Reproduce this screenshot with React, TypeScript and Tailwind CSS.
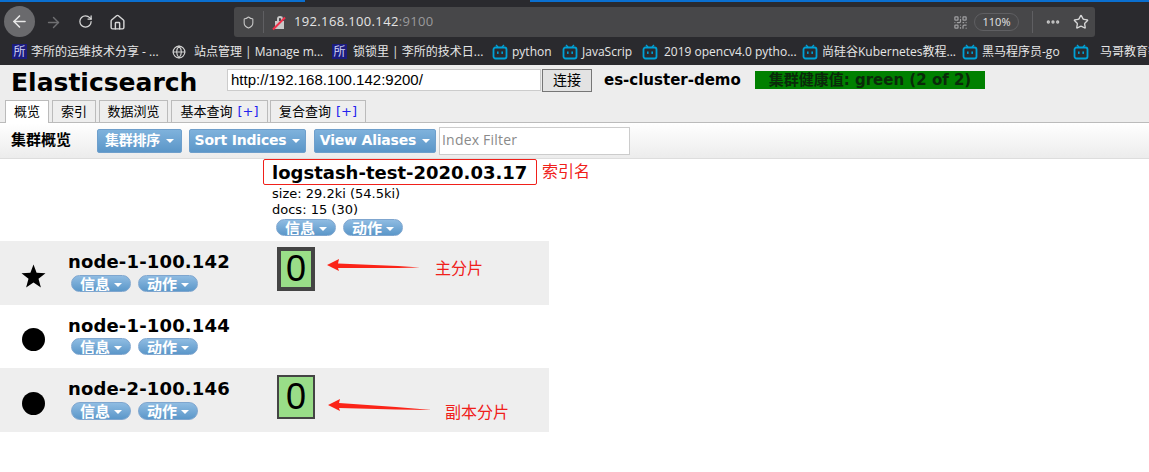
import React from 'react';
import { ArrowLeft, ArrowRight, RotateCw, Home, Star, Ellipsis, Shield, Globe, QrCode } from 'lucide-react';

const FONT = "font-['DejaVu_Sans','Noto_Sans_CJK_SC',sans-serif]";

const Tv = () => (
  <svg width="16" height="16" viewBox="0 0 16 16" fill="none" className="shrink-0">
    <path d="M4 1l2 2M12 1l-2 2" stroke="#00a1d6" strokeWidth="1.4" />
    <rect x="1.5" y="3.5" width="13" height="11" rx="2" stroke="#00a1d6" strokeWidth="1.8" />
    <rect x="5" y="7.5" width="1.6" height="2.4" fill="#00a1d6" />
    <rect x="9.4" y="7.5" width="1.6" height="2.4" fill="#00a1d6" />
  </svg>
);

const Suo = () => (
  <span className="w-[15px] h-[15px] shrink-0 bg-[#1c1c7c] text-[#cfd2f5] text-[12px] leading-[15px] text-center">所</span>
);

const Bookmark = ({ icon, label, w, gap = 'gap-[4px]' }: { icon: React.ReactNode; label: string; w: string; gap?: string }) => (
  <div className={`flex items-center shrink-0 ${gap} ${w}`}>
    {icon}
    <span className="text-[12px] text-[#e6e6e6] whitespace-nowrap">{label}</span>
  </div>
);

const Pill = ({ label, h = 'h-[17px]' }: { label: string; h?: string }) => (
  <div className={`w-[60px] ${h} overflow-hidden rounded-[9px] border border-[#7fa6cf] bg-gradient-to-b from-[#8fbce2] to-[#5b97c9] flex items-start justify-center gap-[4px] text-[15px] leading-[19px] font-bold text-white`}>
    {label}
    <span className="mt-[7px] border-x-[4px] border-t-[4px] border-x-transparent border-t-white" />
  </div>
);

const Actions = ({ h }: { h?: string }) => (
  <div className="flex gap-[7px]">
    <Pill label="信息" h={h} />
    <Pill label="动作" h={h} />
  </div>
);

const ToolButton = ({ label, w, ml = '' }: { label: string; w: string; ml?: string }) => (
  <div className={`${w} ${ml} h-[24px] rounded-[2px] border border-[#6e9fcc] bg-gradient-to-b from-[#7fb2dc] to-[#5b96c8] flex items-center justify-center gap-[6px] text-[14px] tracking-[-0.2px] font-bold text-white`}>
    {label}
    <span className="border-x-[4px] border-t-[4px] border-x-transparent border-t-white" />
  </div>
);

const Tab = ({ children, active, w }: { children: React.ReactNode; active?: boolean; w: string }) => (
  <div className={`${w} h-[22px] border border-[#bbb] border-b-0 text-[13px] leading-[22px] text-center whitespace-nowrap ${active ? 'bg-white h-[23px] -mb-px relative' : 'bg-[#eee]'}`}>
    {children}
  </div>
);

const Plus = () => <span className="text-[#2222ee] ml-[5px]">[+]</span>;

const Shard = ({ border }: { border: string }) => (
  <div className={`w-[38px] h-[44px] bg-[#99dd88] border-[#444] ${border} flex items-center justify-center text-[36px] leading-none font-['Liberation_Sans',sans-serif] text-black`}>
    0
  </div>
);

const Row = ({ icon, name, grey, children, pad, h, pillH, pillTop }: { icon: React.ReactNode; name: string; grey?: boolean; children?: React.ReactNode; pad: string; h: string; pillH?: string; pillTop: string }) => (
  <div className={`${h} w-[549px] flex ${grey ? 'bg-[#eeeeee]' : 'bg-white'}`}>
    <div className="w-[68px] shrink-0 flex justify-center items-center pt-[6px] pr-[2px]">{icon}</div>
    <div className={`w-[209px] shrink-0 ${pad}`}>
      <div className="text-[18px] leading-[22px] tracking-[0.15px] font-bold text-black">{name}</div>
      <div className={`ml-[3px] ${pillTop}`}>
        <Actions h={pillH} />
      </div>
    </div>
    {children}
  </div>
);

const RedArrow = ({ className, d }: { className: string; d: string }) => (
  <svg width="110" height="20" viewBox="0 0 110 20" className={`absolute ${className}`}>
    <path d={d} fill="#fb2418" />
  </svg>
);

const Dot = () => <div className="w-[23px] h-[23px] rounded-full bg-black" />;

export default function App() {
  return (
    <div className={`relative w-[1149px] h-[472px] overflow-hidden bg-white ${FONT}`}>
      {/* Browser chrome */}
      <div className="h-[65px] bg-[#2a2a2e] font-['Open_Sans','Noto_Sans_CJK_SC',sans-serif]">
        <div className="h-[36px] relative flex items-start">
          <div className="absolute inset-x-0 top-0 h-[2px] flex">
            <div className="w-[305px] bg-[#0a6fd0]" />
            <div className="w-[225px] bg-[#2a2a2e]" />
            <div className="flex-1 bg-[#0a6fd0]" />
          </div>
          <div className="ml-[4px] mt-[6px] w-[31px] h-[31px] rounded-full bg-[#6a6a6d] flex items-center justify-center">
            <ArrowLeft size={19} strokeWidth={2} className="text-[#e8e8e8]" />
          </div>
          <ArrowRight size={17} strokeWidth={2} className="ml-[10px] mt-[14px] text-[#6f6f72]" />
          <RotateCw size={15} strokeWidth={2} className="ml-[16px] mt-[14px] text-[#d8d8d8]" />
          <Home size={17} strokeWidth={2} className="ml-[16px] mt-[14px] text-[#d8d8d8]" />
          <div className="ml-[108px] mt-[7px] w-[861px] h-[30px] rounded-[3px] bg-[#474749] flex items-center">
            <Shield size={13} strokeWidth={2} className="ml-[8px] text-[#c8c8c8]" />
            <div className="ml-[8px] w-px h-[22px] bg-[#5f5f62]" />
            <div className="relative ml-[8px] w-[13px] h-[13px]">
              <div className="absolute left-[3px] top-[5px] w-[9px] h-[8px] bg-[#c8c8c8]" />
              <div className="absolute left-[5px] top-0 w-[6px] h-[7px] rounded-t-full border-2 border-[#c8c8c8] border-b-0" />
              <div className="absolute left-[6px] -top-[1px] w-[2px] h-[17px] rotate-45 bg-[#f0304a]" />
            </div>
            <div className="ml-[9px] text-[13px] tracking-[0.35px] text-[#e4e4e4]">
              192.168.100.142<span className="text-[#9a9a9c]">:9100</span>
            </div>
            <div className="ml-auto flex items-center">
              <QrCode size={15} strokeWidth={2} className="text-[#a0a0a2]" />
              <div className="ml-[6px] w-[45px] h-[18px] rounded-full border border-[#5f5f62] text-[11px] leading-[16px] text-center text-[#e4e4e4]">110%</div>
              <div className="ml-[13px] w-px h-[22px] bg-[#5f5f62]" />
              <Ellipsis size={16} strokeWidth={3} className="ml-[12px] text-[#c8c8c8]" />
              <Star size={16} strokeWidth={2} className="ml-[12px] mr-[6px] text-[#d8d8d8]" />
            </div>
          </div>
        </div>
        <div className="h-[29px] pl-[12px] pt-[2px] flex items-center overflow-hidden">
          <Bookmark w="w-[160px]" icon={<Suo />} label="李所的运维技术分享 - ..." />
          <Bookmark w="w-[160px]" gap="gap-[8px]" icon={<Globe size={14} className="text-[#d0d0d0]" />} label="站点管理 | Manage m..." />
          <Bookmark w="w-[160px]" gap="gap-[6px]" icon={<Suo />} label="锁锁里 | 李所的技术日..." />
          <Bookmark w="w-[70px]" icon={<Tv />} label="python" />
          <Bookmark w="w-[80px]" icon={<Tv />} label="JavaScrip" />
          <Bookmark w="w-[160px]" gap="gap-[6px]" icon={<Tv />} label="2019 opencv4.0 pytho..." />
          <Bookmark w="w-[160px]" icon={<Tv />} label="尚硅谷Kubernetes教程..." />
          <Bookmark w="w-[111px]" icon={<Tv />} label="黑马程序员-go" />
          <Bookmark w="w-[80px]" gap="gap-[11px]" icon={<Tv />} label="马哥教育等" />
        </div>
      </div>

      {/* Header */}
      <div className="h-[57px] bg-[#ededed] relative">
        <div className="flex items-start pl-[11px]">
          <div className="w-[216px] text-[25px] leading-[36px] font-bold text-black">Elasticsearch</div>
          <div className="mt-[4px] w-[314px] h-[22px] bg-white border border-[#ccc] leading-[20px] pl-[3px] font-['Liberation_Sans',sans-serif] text-[15px] text-black">
            http://192.168.100.142:9200/
          </div>
          <div className="ml-[1px] mt-[4px] w-[50px] h-[23px] bg-[#e3e3e3] border border-[#767676] text-[14px] leading-[21px] text-center text-black">连接</div>
          <div className="ml-[12px] mt-[4px] w-[151px] text-[15px] leading-[22px] font-bold text-black whitespace-nowrap">es-cluster-demo</div>
          <div className="mt-[6px] w-[230px] h-[18px] bg-[#008000] text-[15px] leading-[18px] font-bold text-center text-[#0a2a0a] whitespace-nowrap">集群健康值: green (2 of 2)</div>
        </div>
        <div className="absolute left-[5px] bottom-0 flex gap-[3px]">
          <Tab w="w-[44px]" active>概览</Tab>
          <Tab w="w-[44px]">索引</Tab>
          <Tab w="w-[69px]">数据浏览</Tab>
          <Tab w="w-[97px]">基本查询<Plus /></Tab>
          <div className="-ml-px">
            <Tab w="w-[96px]">复合查询<Plus /></Tab>
          </div>
        </div>
      </div>

      {/* Toolbar */}
      <div className="h-[37px] border-y border-t-[#bbb] border-b-[#ddd] bg-gradient-to-b from-white to-[#ececec] flex items-center pl-[11px]">
        <div className="w-[86px] text-[15px] font-bold text-black whitespace-nowrap">集群概览</div>
        <div className="flex gap-[7px] items-center">
          <ToolButton w="w-[85px]" label="集群排序" />
          <ToolButton w="w-[117px]" label="Sort Indices" />
          <ToolButton w="w-[122px]" ml="ml-px" label="View Aliases" />
        </div>
        <div className="ml-[3px] w-[191px] h-[28px] bg-white border border-[#ccc] pl-[2px] text-[14px] leading-[24px] tracking-[0.2px] text-[#8a8a8a] font-['Open_Sans',sans-serif]">Index Filter</div>
      </div>

      {/* Cluster table */}
      <div>
        <div className="h-[82px] pl-[272px] pt-[1px]">
          <div className="text-[18px] leading-[26px] font-bold text-black whitespace-nowrap">logstash-test-2020.03.17</div>
          <div className="text-[13px] leading-[16px] text-black">size: 29.2ki (54.5ki)</div>
          <div className="text-[13px] leading-[16px] text-black">docs: 15 (30)</div>
          <div className="ml-[4px] mt-[1px]">
            <Actions h="h-[17px]" />
          </div>
        </div>
        <Row
          grey
          name="node-1-100.142"
          h="h-[64px]"
          pad="pt-[10px]"
          pillTop="mt-[2px]"
          icon={
            <svg width="25" height="24" viewBox="0 0 25 24">
              <path d="M12.5 0.5 L15.6 8.7 L24.5 9.2 L17.5 14.7 L19.9 23.5 L12.5 18.5 L5.1 23.5 L7.5 14.7 L0.5 9.2 L9.4 8.7 Z" fill="#000" />
            </svg>
          }
        >
          <div className="pt-[6px]">
            <Shard border="border-[4px]" />
          </div>
        </Row>
        <Row name="node-1-100.144" h="h-[63px]" pad="pt-[10px]" pillTop="mt-[1px]" icon={<Dot />} />
        <Row grey name="node-2-100.146" h="h-[64px]" pad="pt-[10px]" pillTop="mt-[2px]" pillH="h-[18px]" icon={<Dot />}>
          <div className="pt-[7px]">
            <Shard border="border-[2px]" />
          </div>
        </Row>
      </div>

      {/* Annotations drawn over the page */}
      <div className="absolute left-[263px] top-[159px] w-[274px] h-[26px] rounded-[2px] border border-[#f0201a]" />
      <div className="absolute left-[542px] top-[162px] text-[16px] leading-[20px] text-[#f0201a]">索引名</div>
      <RedArrow className="left-[325px] top-[257px]" d="M2 8 L14 2 L13 6.5 L73 9 L95 10.5 L73 11 L13 11 L14 14 Z" />
      <div className="absolute left-[435px] top-[259px] text-[16px] leading-[20px] text-[#f0201a]">主分片</div>
      <RedArrow className="left-[326px] top-[398px]" d="M2 7 L14 1 L13 5 L70 9 L106 12 L70 11.5 L13 10 L14 13 Z" />
      <div className="absolute left-[445px] top-[403px] text-[16px] leading-[20px] text-[#f0201a]">副本分片</div>
    </div>
  );
}
